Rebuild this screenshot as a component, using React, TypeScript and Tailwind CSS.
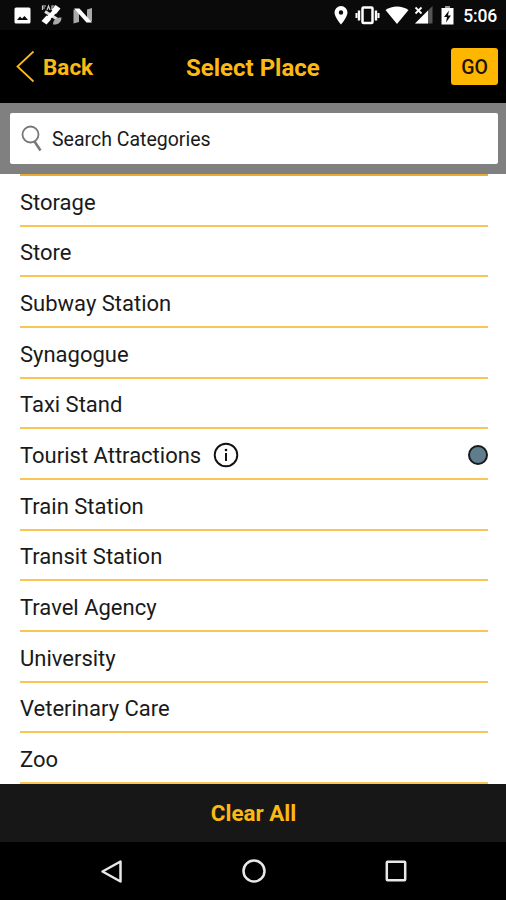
import { clsx } from "clsx";
import { useState } from "react";

const categories = [
  "Storage",
  "Store",
  "Subway Station",
  "Synagogue",
  "Taxi Stand",
  "Tourist Attractions",
  "Train Station",
  "Transit Station",
  "Travel Agency",
  "University",
  "Veterinary Care",
  "Zoo",
];

const StatusBar = () => (
  <div className="flex h-[30px] shrink-0 items-center justify-between bg-[#0a0a0a] pr-[9px] pl-[14px] text-white">
    <div className="flex items-center gap-[10px]">
      <svg width="17" height="17" viewBox="0 0 17 17">
        <rect x="0.5" y="0.5" width="16" height="16" rx="1.5" fill="#fff" />
        <path d="M3 13 6 9.5l2 2L10.5 9l3.5 4z" fill="#0a0a0a" />
      </svg>
      <svg width="22" height="22" viewBox="0 0 22 22">
        <path
          d="M1.5 6V2H5M1.5 4H4M6 6l1.5-4L9 6M11 6V2h2.5"
          fill="none"
          stroke="#ccc"
          strokeWidth="1.2"
        />
        <path d="m14.5 1 5 3.5-4.5 5.5-4.5-4zM5.5 11.5l4.5 4L5.5 20.5.5 17z" fill="#fff" />
        <path d="m4 7.5 12 7.500" stroke="#ddd" strokeWidth="3" />
        <path d="M6.500 15 15 6" stroke="#fff" strokeWidth="4.500" />
        <path d="M12 20.500c0-4.500 3-7.500 8.500-7 0 4.500-3 7.500-8.500 7z" fill="#aaa" />
      </svg>
      <svg width="20" height="17" viewBox="0 0 20 17">
        <path d="M.5 2.500 6 4v11l-5.500 1.500zM14 2.500 19 1v13.500l-5-1.500z" fill="#aaa" />
        <path d="M1 1.500h5.500L19 15.500h-5.500z" fill="#fff" />
      </svg>
    </div>
    <div className="flex items-center">
      <svg width="14" height="19" viewBox="0 0 14 19">
        <path
          d="M7 0a6.500 6.500 0 0 0-6.500 6.500C.5 11 7 18.500 7 18.500S13.500 11 13.500 6.500A6.500 6.500 0 0 0 7 0zm0 4.300a2.200 2.200 0 1 1 0 4.400 2.200 2.200 0 0 1 0-4.400z"
          fill="#fff"
        />
      </svg>
      <svg className="ml-[7px]" width="25" height="19" viewBox="0 0 25 19">
        <rect x="7.500" y="1.500" width="10" height="15.500" rx="1" fill="none" stroke="#fff" strokeWidth="2.500" />
        <path d="M4 4.500v10M21 4.500v10" stroke="#fff" strokeWidth="2.400" />
        <path d="M1.500 7v5M23.500 7v5" stroke="#fff" strokeWidth="2" />
      </svg>
      <svg className="ml-[5px]" width="24" height="18" viewBox="0 0 24 18">
        <path d="M.5 4C7-.8 17-.8 23.500 4L12 18z" fill="#fff" />
      </svg>
      <svg className="ml-[5px]" width="19" height="18" viewBox="0 0 19 18">
        <path d="M18.500 0v17.500H1z" fill="#555" />
        <path d="M14 4.500v13H1z" fill="#fff" />
        <path d="M0 0h9v9H0z" fill="#0a0a0a" />
        <path d="m1.500 1.500 6 6m0-6-6 6" stroke="#fff" strokeWidth="1.800" />
      </svg>
      <svg className="ml-[8px]" width="13" height="19" viewBox="0 0 13 19">
        <path d="M4 0h5v2H4z" fill="#999" />
        <path d="M.5 2h12v16.500H.5z" fill="#fff" />
        <path d="M8 4.500 3 11h3l-1 5.500L10 9.500H7z" fill="#0a0a0a" />
      </svg>
      <span className="ml-[9px] pt-[3px] text-[17.5px] leading-none font-medium tracking-[-0.2px]">5:06</span>
    </div>
  </div>
);

const Header = () => (
  <header className="grid h-[73px] shrink-0 grid-cols-[170px_auto_1fr] items-center bg-black pr-2 pl-4 text-[#fdb913]">
    <button type="button" className="flex items-center gap-[8px] text-[22.5px] leading-none font-bold">
      <svg width="19" height="33" viewBox="0 0 19 33" fill="none" stroke="currentColor" strokeWidth="1.8">
        <path d="M17.5 1.5 1.5 16.5l16 15" />
      </svg>
      <span className="pt-[2px]">Back</span>
    </button>
    <h1 className="pt-[2px] text-[24px] leading-none font-bold">Select Place</h1>
    <button
      type="button"
      className="h-[37px] w-[47px] justify-self-end rounded-[3px] bg-[#ffb600] pt-[3px] text-[19.5px] leading-none font-medium text-[#1c1300]"
    >
      GO
    </button>
  </header>
);

const InfoIcon = () => (
  <svg width="26" height="26" viewBox="0 0 26 26">
    <circle cx="13" cy="13" r="11.3" fill="none" stroke="#111" strokeWidth="1.9" />
    <circle cx="13" cy="8" r="1.3" fill="#111" />
    <path d="M13 11v8" stroke="#111" strokeWidth="2" />
  </svg>
);

const App = () => {
  const [search, setSearch] = useState("");
  const [selected, setSelected] = useState<string | null>("Tourist Attractions");

  const visible = categories.filter((c) => c.toLowerCase().includes(search.toLowerCase()));

  return (
    <div className="flex h-[900px] w-[506px] flex-col overflow-hidden bg-white font-['Roboto',sans-serif]">
      <StatusBar />
      <Header />
      <div className="h-[71px] shrink-0 bg-[#808080] pt-[10px] pr-[8px] pl-[10px]">
        <label className="flex h-[51px] items-center rounded-[2px] bg-white pl-[11px]">
          <svg width="22" height="27" viewBox="0 0 22 27" fill="none" stroke="#777">
            <circle cx="9.5" cy="9.5" r="8" strokeWidth="1.8" />
            <path d="m13.5 16.5 6 9" strokeWidth="2.5" />
          </svg>
          <input
            value={search}
            onChange={(e) => setSearch(e.target.value)}
            placeholder="Search Categories"
            className="ml-[9px] flex-1 pt-[3px] text-[19.5px] outline-none placeholder:text-[#1a1a1a]"
          />
        </label>
      </div>
      <ul className="mr-[18px] ml-5 flex flex-1 flex-col border-t-2 border-[#e9ac35]">
        {visible.map((c) => (
          <li
            key={c}
            onClick={() => setSelected(selected === c ? null : c)}
            className="flex h-[50.67px] shrink-0 items-center border-b-2 border-[#f9c556] pt-[2px] text-[22px] leading-none text-[#1a1a1a]"
          >
            <span className="pt-[3px]">{c}</span>
            {c === "Tourist Attractions" && (
              <span className="ml-[12px]">
                <InfoIcon />
              </span>
            )}
            <span
              className={clsx(
                "ml-auto size-5 rounded-full border-2 border-[#18191b] bg-[#5f7d8c]",
                selected !== c && "hidden",
              )}
            />
          </li>
        ))}
      </ul>
      <button
        type="button"
        onClick={() => setSelected(null)}
        className="h-[58px] shrink-0 bg-[#171717] pt-px pl-px text-[22.4px] leading-none font-bold text-[#fdb913]"
      >
        Clear All
      </button>
      <nav className="flex h-[58px] shrink-0 items-center bg-black pl-[100px]">
        <svg width="23" height="25" viewBox="0 0 23 25" fill="none" stroke="#e8e8e8" strokeWidth="2.5">
          <path d="M20.5 2.5v20L2.5 12.5z" strokeLinejoin="round" />
        </svg>
        <svg className="ml-[119px]" width="24" height="24" viewBox="0 0 24 24" fill="none" stroke="#e8e8e8" strokeWidth="2.5">
          <circle cx="12" cy="12" r="10.5" />
        </svg>
        <svg className="ml-[119px]" width="22" height="22" viewBox="0 0 22 22" fill="none" stroke="#e8e8e8" strokeWidth="2.5">
          <rect x="1.8" y="1.8" width="18.4" height="18.4" rx="0.8" />
        </svg>
      </nav>
    </div>
  );
};

export default App;
